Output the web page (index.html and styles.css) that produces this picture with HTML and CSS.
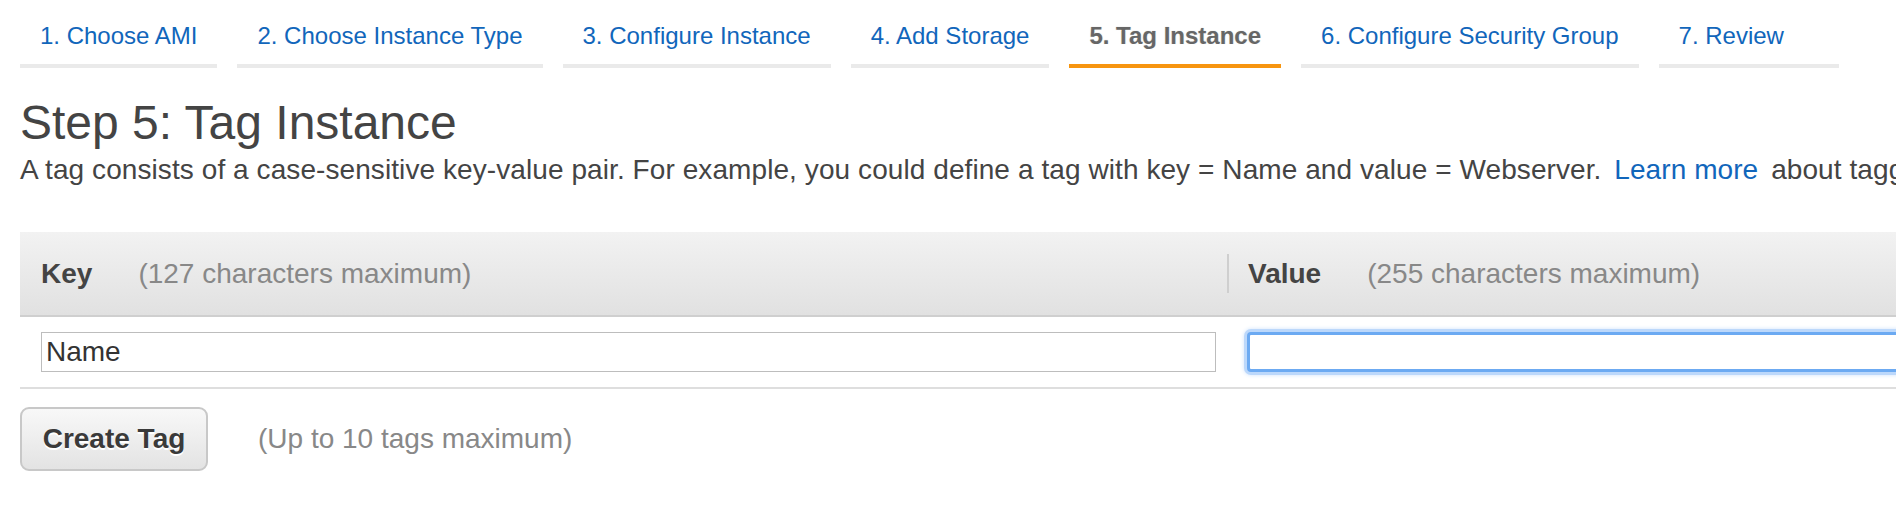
FILE: index.html
```html
<!DOCTYPE html>
<html>
<head>
<meta charset="utf-8">
<link rel="stylesheet" href="styles.css">
</head>
<body>
<div class="page">
  <nav class="tabs">
    <a class="tab">1. Choose AMI</a>
    <a class="tab">2. Choose Instance Type</a>
    <a class="tab">3. Configure Instance</a>
    <a class="tab">4. Add Storage</a>
    <a class="tab tab-active">5. Tag Instance</a>
    <a class="tab">6. Configure Security Group</a>
    <a class="tab tab-last">7. Review</a>
  </nav>
  <h1 class="title">Step 5: Tag Instance</h1>
  <p class="desc">A tag consists of a case-sensitive key-value pair. For example, you could define a tag with key = Name and value = Webserver. <a class="link">Learn more</a> about tagging your Amazon EC2 resources.</p>
  <div class="tag-table">
    <div class="thead">
      <div class="th th-key"><span class="th-label">Key</span><span class="th-hint">(127 characters maximum)</span></div>
      <div class="th th-value"><span class="th-label">Value</span><span class="th-hint">(255 characters maximum)</span></div>
    </div>
    <div class="trow">
      <div class="td td-key"><input class="field field-key" type="text" value="Name"></div>
      <div class="td td-value"><input class="field field-value" type="text" value=""></div>
    </div>
  </div>
  <div class="actions">
    <button class="btn">Create Tag</button>
    <span class="note">(Up to 10 tags maximum)</span>
  </div>
</div>
</body>
</html>
```
FILE: styles.css
```css
html, body {
  margin: 0;
  padding: 0;
  background: #fff;
  overflow: hidden;
}
body {
  font-family: "Liberation Sans", Arial, Helvetica, sans-serif;
  color: #444;
}
.page {
  padding: 20px 0 0 20px;
  width: 2600px;
}
.tabs {
  display: flex;
  gap: 20px;
}
.tab {
  display: block;
  padding: 0 20px 12px;
  line-height: 32px;
  font-size: 24px;
  color: #1166bb;
  border-bottom: 4px solid #eaeaea;
  white-space: nowrap;
}
.tab-active {
  color: #666;
  font-weight: bold;
  border-bottom-color: #f7950f;
  text-shadow: 0 1px 0 #fff, 0 0 1px #aaa;
}
.tab-last {
  min-width: 140px;
}
.title {
  margin: 27px 0 0;
  font-size: 48px;
  line-height: 56px;
  font-weight: normal;
  color: #444;
}
.desc {
  margin: 3px 0 0;
  font-size: 28px;
  line-height: 32px;
  letter-spacing: 0.08px;
  white-space: nowrap;
  color: #444;
}
.link {
  color: #1166bb;
  margin: 0 5px;
}
.tag-table {
  margin-top: 46px;
}
.thead {
  display: grid;
  grid-template-columns: 1207px 1fr;
  height: 83px;
  background: linear-gradient(#f2f2f2, #e1e1e1);
  border-bottom: 2px solid #cfcfcf;
}
.th {
  display: flex;
  align-items: center;
  padding-left: 21px;
  font-size: 28px;
}
.th-value {
  position: relative;
}
.th-value::before {
  content: "";
  position: absolute;
  left: 0;
  top: 22px;
  bottom: 22px;
  border-left: 2px solid #cfcfcf;
}
.th-label {
  font-weight: bold;
  color: #444;
}
.th-hint {
  color: #888;
  margin-left: 46px;
}
.trow {
  display: grid;
  grid-template-columns: 1207px 1fr;
  padding: 15px 0;
  border-bottom: 2px solid #dedede;
}
.td-key {
  padding-left: 21px;
}
.td-value {
  padding-left: 20px;
}
.field {
  display: block;
  box-sizing: border-box;
  height: 40px;
  margin: 0;
  padding: 0 4px;
  font-family: "Liberation Sans", Arial, Helvetica, sans-serif;
  font-size: 28px;
  color: #333;
  background: #fff;
  border: 1px solid #bdbdbd;
  border-radius: 0;
  outline: none;
}
.field-key {
  width: 1175px;
}
.field-value {
  width: 1300px;
  border: 3px solid #6caaf2;
  border-radius: 4px;
  box-shadow: 0 0 0 3px #bcd8fb, 0 0 4px 3px #cfe3fc;
}
.actions {
  display: flex;
  align-items: center;
  gap: 50px;
  margin-top: 18px;
}
.btn {
  box-sizing: border-box;
  width: 188px;
  height: 64px;
  padding: 0;
  font-family: "Liberation Sans", Arial, Helvetica, sans-serif;
  font-size: 28px;
  font-weight: bold;
  color: #3a3a3a;
  text-shadow: 0 2px 0 #fff;
  background: linear-gradient(#f8f8f8, #e3e3e3);
  border: 2px solid #c8c8c8;
  border-radius: 9px;
}
.note {
  font-size: 28px;
  color: #888;
}
```
